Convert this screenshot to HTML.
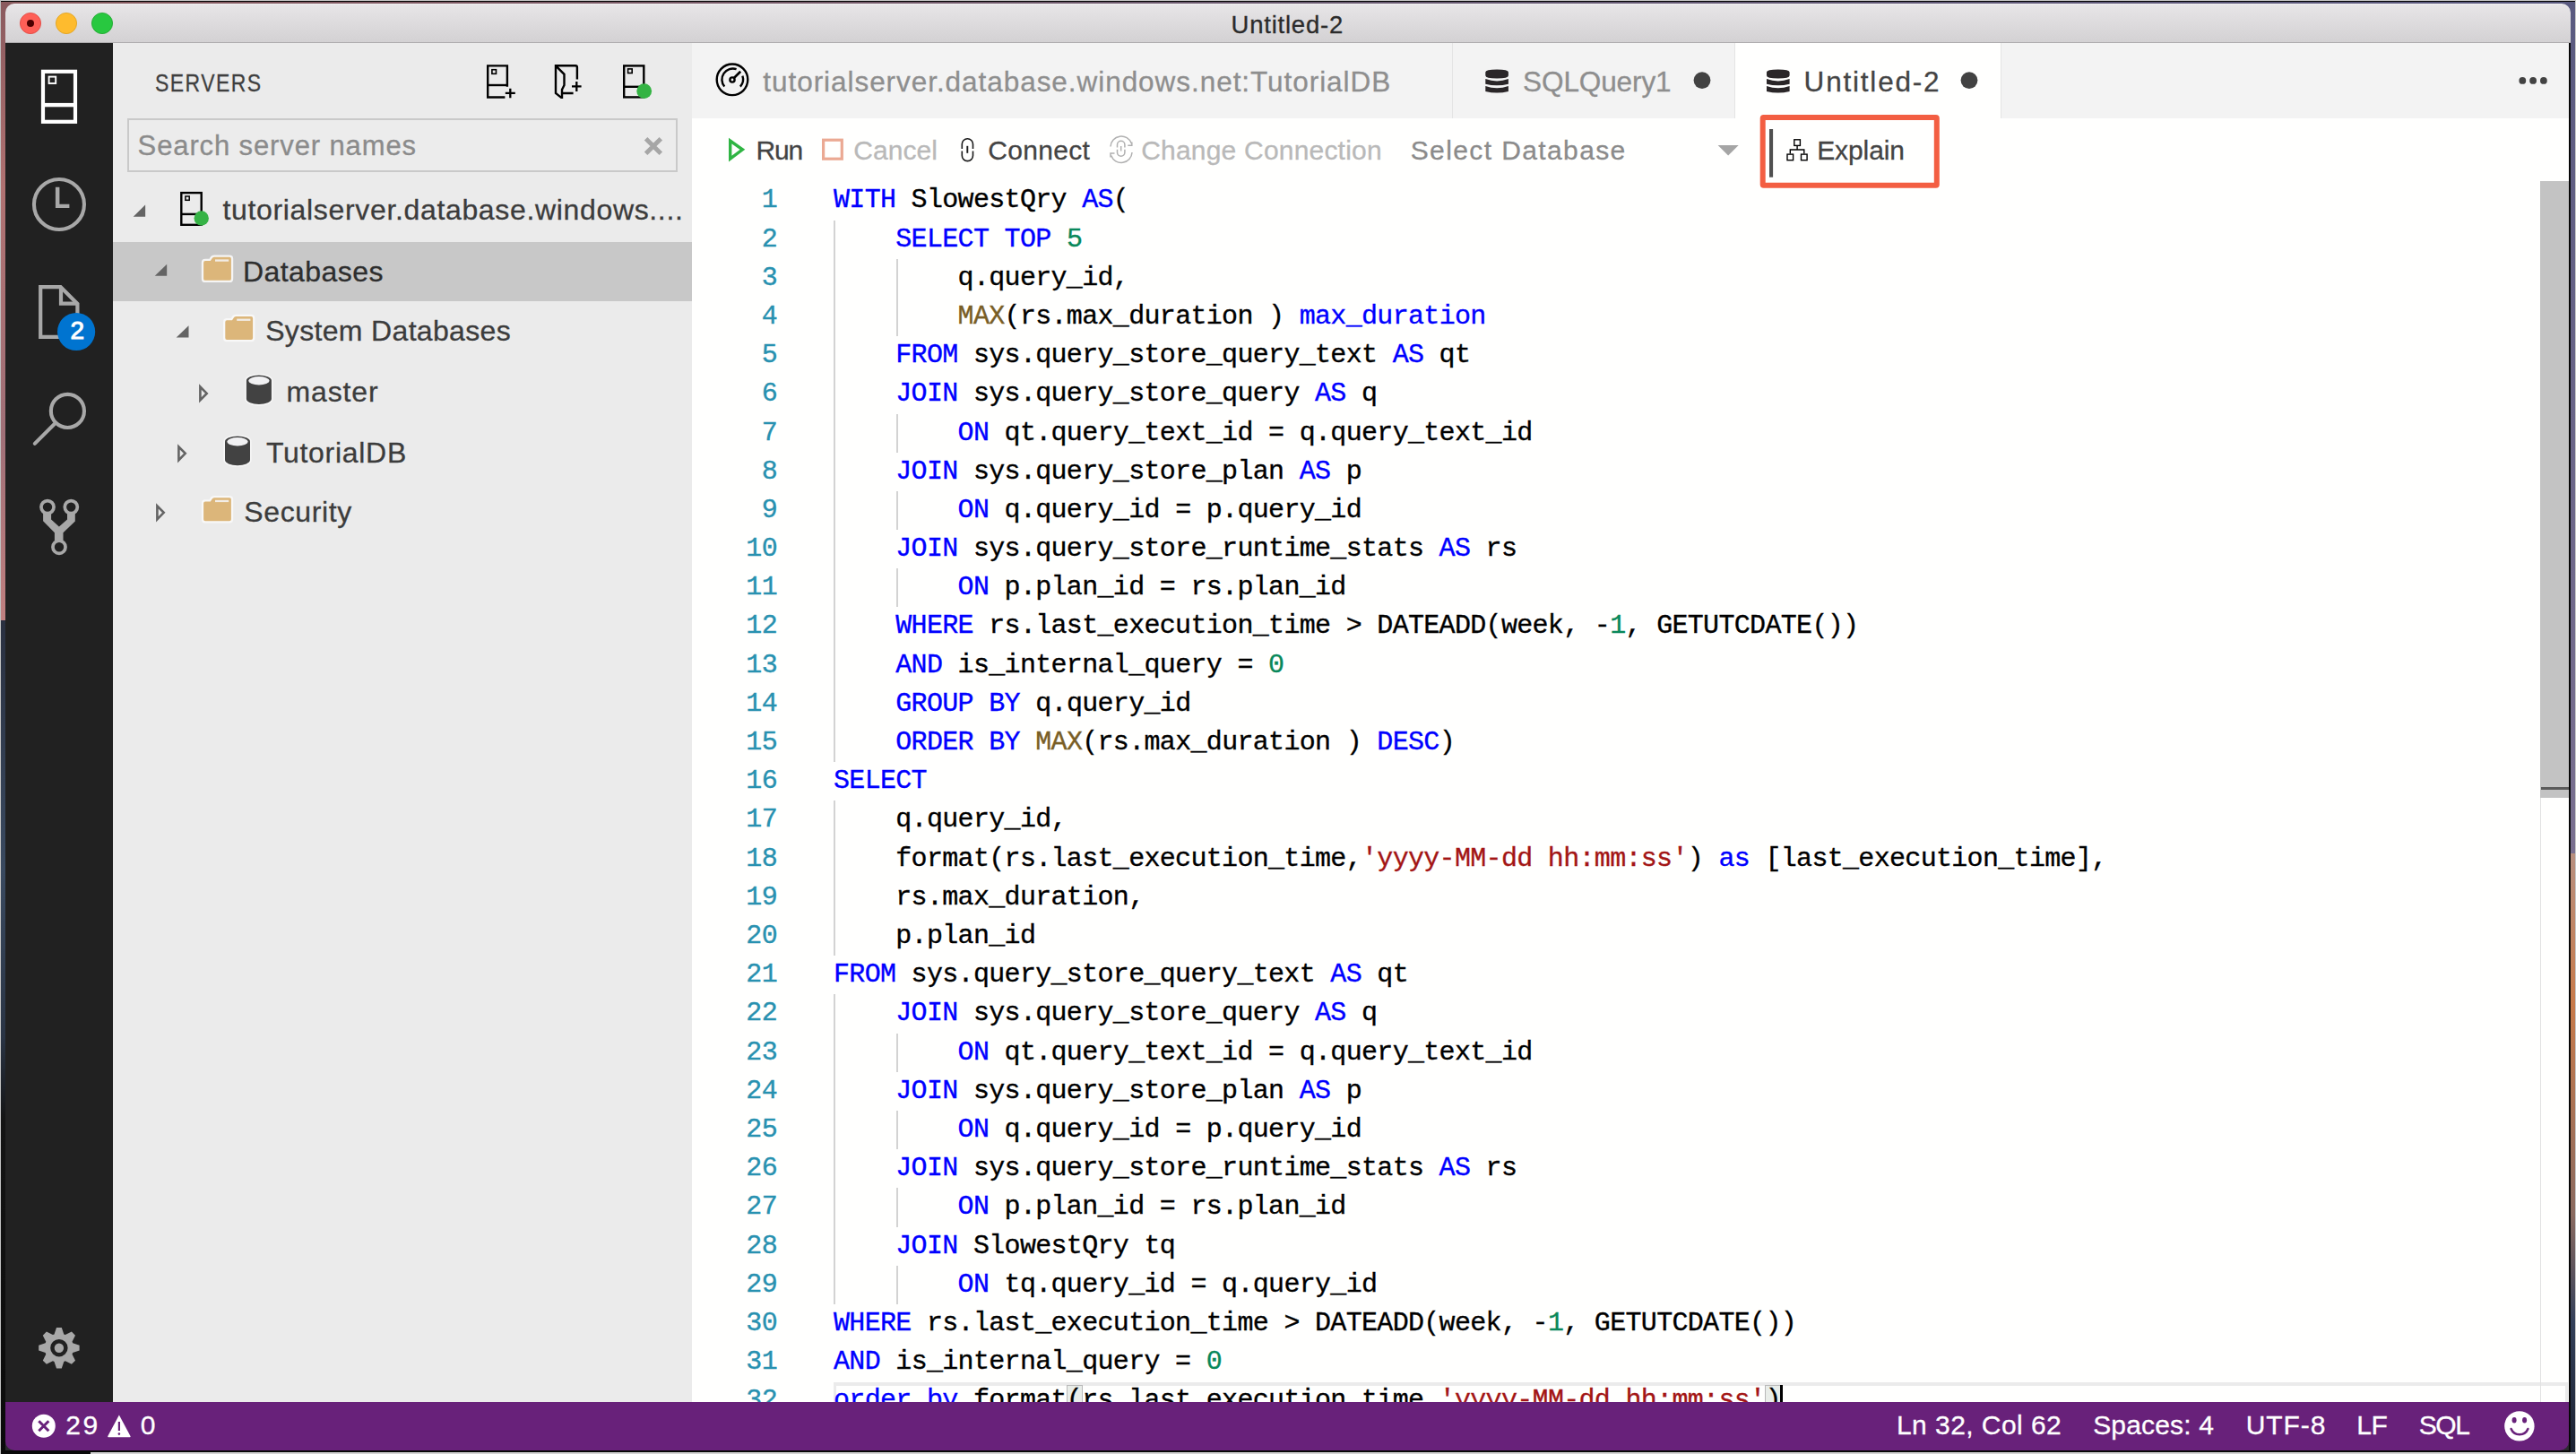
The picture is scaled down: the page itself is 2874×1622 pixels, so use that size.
<!DOCTYPE html>
<html><head><meta charset="utf-8">
<style>
*{margin:0;padding:0;box-sizing:border-box}
html,body{width:2874px;height:1622px;overflow:hidden;background:#2a2a2e}
body{position:relative;font-family:"Liberation Sans",sans-serif}
.abs{position:absolute}
.t{position:absolute;white-space:pre;line-height:1;-webkit-text-stroke:0.3px}
#titlebar{position:absolute;left:6px;top:4px;width:2862px;height:44px;border-radius:10px 10px 0 0;background:linear-gradient(#f4f2f4,#e7e5e7 4%,#d3d1d3);border-bottom:1px solid #aeacae}
#act{position:absolute;left:6px;top:48px;width:120px;height:1516px;background:#212121}
#side{position:absolute;left:126px;top:48px;width:646px;height:1516px;background:#ebebeb}
#editor{position:absolute;left:772px;top:48px;width:2094px;height:1516px;background:#fffffe}
#tabs{position:absolute;left:772px;top:48px;width:2094px;height:84px;background:#f3f3f3}
#status{position:absolute;left:6px;top:1564px;width:2860px;height:54px;background:#68217a;border-radius:0 0 10px 10px}
#codeclip{position:absolute;left:772px;top:132px;width:2094px;height:1432px;overflow:hidden}
#code{position:absolute;left:-772px;top:-132px;width:2874px;height:1622px;font-family:"Liberation Mono",monospace;font-size:30px;letter-spacing:-0.68px;-webkit-text-stroke:0.35px}
.ln{position:absolute;left:0;height:43.19px;line-height:43.19px;width:2874px;white-space:pre;color:#000}
.ln b{position:absolute;font-weight:normal;color:#2891b0;right:2007px;}
.ln span{position:absolute;left:930px}
i{font-style:normal}
.k{color:#0000ff}.s{color:#a31515}.n{color:#09885a}.f{color:#795e26}
.ig{position:absolute;width:2px;background:#d3d3d3}
</style></head><body>
<!-- desktop edges -->
<div class="abs" style="left:0;top:0;width:2874px;height:1px;background:#c8c8c8"></div>
<div class="abs" style="left:0;top:1px;width:2874px;height:1px;background:#050505"></div>
<div class="abs" style="left:0;top:2px;width:2874px;height:20px;background:linear-gradient(90deg,#8a5a5e,#6a5a70 50%,#5a5a80)"></div>
<div class="abs" style="left:0;top:0;width:1px;height:1622px;background:#c0c0c0"></div>
<div class="abs" style="left:1px;top:2px;width:5px;height:690px;background:linear-gradient(#8a5a5e,#b07272 30%,#a07078 70%,#c08080)"></div>
<div class="abs" style="left:1px;top:692px;width:5px;height:930px;background:linear-gradient(#2a3040,#3a4a60 30%,#2a3444 50%,#141414 60%,#0a0a0a)"></div>
<div class="abs" style="left:2866px;top:48px;width:2px;height:1574px;background:#080808"></div>
<div class="abs" style="left:2868px;top:2px;width:5px;height:950px;background:linear-gradient(#5a5a80,#7a7090)"></div>
<div class="abs" style="left:2868px;top:952px;width:5px;height:670px;background:linear-gradient(#b89080,#c87a4a 25%,#8a6a60 60%,#34405a 78%,#1a2030)"></div>
<div class="abs" style="left:2873px;top:0;width:1px;height:1622px;background:#c8c8c8"></div>
<div class="abs" style="left:6px;top:1618px;width:2862px;height:2px;background:#080808"></div>
<div class="abs" style="left:101px;top:1620px;width:2773px;height:2px;background:#d4d4d4"></div>
<div class="abs" style="left:1px;top:1620px;width:100px;height:2px;background:#0a0a0a"></div>
<div id="titlebar"></div>
<div id="act"></div>
<div id="side"></div>
<div id="editor"></div>
<div id="tabs"></div>
<!-- selected tree row -->
<div class="abs" style="left:126px;top:270px;width:646px;height:66px;background:#c8c8c8"></div>
<!-- search box -->
<div class="abs" style="left:142px;top:132px;width:614px;height:60px;border:2px solid #c9c9c9;background:#ececec"></div>
<!-- tab separators / active tab -->
<div class="abs" style="left:1620px;top:48px;width:1px;height:84px;background:#e4e4e4"></div>
<div class="abs" style="left:1935px;top:48px;width:1px;height:84px;background:#e4e4e4"></div>
<div class="abs" style="left:1936px;top:48px;width:296px;height:84px;background:#fffffe"></div>
<div class="abs" style="left:2232px;top:48px;width:1px;height:84px;background:#e4e4e4"></div>

<div id="codeclip"><div id="code">
<div class="ig" style="left:930.0px;top:245.59px;height:604.66px"></div><div class="ig" style="left:1000.3px;top:288.78px;height:86.38px"></div><div class="ig" style="left:1000.3px;top:461.54px;height:43.19px"></div><div class="ig" style="left:1000.3px;top:547.92px;height:43.19px"></div><div class="ig" style="left:1000.3px;top:634.30px;height:43.19px"></div><div class="ig" style="left:930.0px;top:893.44px;height:172.76px"></div><div class="ig" style="left:930.0px;top:1109.39px;height:345.52px"></div><div class="ig" style="left:1000.3px;top:1152.58px;height:43.19px"></div><div class="ig" style="left:1000.3px;top:1238.96px;height:43.19px"></div><div class="ig" style="left:1000.3px;top:1325.34px;height:43.19px"></div><div class="ig" style="left:1000.3px;top:1411.72px;height:43.19px"></div>
<div class="abs" style="left:930px;top:1542px;width:1935px;height:44px;border:3px solid #ebebeb;border-top-width:4px"></div>
<div class="abs" style="left:1190px;top:1545px;width:18px;height:38px;background:#e9ede9;border:1px solid #b9b9b9"></div>
<div class="abs" style="left:1969px;top:1545px;width:18px;height:38px;background:#e9ede9;border:1px solid #b9b9b9"></div>
<div class="abs" style="left:1986px;top:1545px;width:3px;height:40px;background:#000"></div>
<div class="ln" style="top:202.40px"><b>1</b><span><i class="k">WITH</i> SlowestQry <i class="k">AS</i>(</span></div>
<div class="ln" style="top:245.59px"><b>2</b><span>    <i class="k">SELECT</i> <i class="k">TOP</i> <i class="n">5</i></span></div>
<div class="ln" style="top:288.78px"><b>3</b><span>        q.query_id,</span></div>
<div class="ln" style="top:331.97px"><b>4</b><span>        <i class="f">MAX</i>(rs.max_duration ) <i class="k">max_duration</i></span></div>
<div class="ln" style="top:375.16px"><b>5</b><span>    <i class="k">FROM</i> sys.query_store_query_text <i class="k">AS</i> qt</span></div>
<div class="ln" style="top:418.35px"><b>6</b><span>    <i class="k">JOIN</i> sys.query_store_query <i class="k">AS</i> q</span></div>
<div class="ln" style="top:461.54px"><b>7</b><span>        <i class="k">ON</i> qt.query_text_id = q.query_text_id</span></div>
<div class="ln" style="top:504.73px"><b>8</b><span>    <i class="k">JOIN</i> sys.query_store_plan <i class="k">AS</i> p</span></div>
<div class="ln" style="top:547.92px"><b>9</b><span>        <i class="k">ON</i> q.query_id = p.query_id</span></div>
<div class="ln" style="top:591.11px"><b>10</b><span>    <i class="k">JOIN</i> sys.query_store_runtime_stats <i class="k">AS</i> rs</span></div>
<div class="ln" style="top:634.30px"><b>11</b><span>        <i class="k">ON</i> p.plan_id = rs.plan_id</span></div>
<div class="ln" style="top:677.49px"><b>12</b><span>    <i class="k">WHERE</i> rs.last_execution_time &gt; DATEADD(week, -<i class="n">1</i>, GETUTCDATE())</span></div>
<div class="ln" style="top:720.68px"><b>13</b><span>    <i class="k">AND</i> is_internal_query = <i class="n">0</i></span></div>
<div class="ln" style="top:763.87px"><b>14</b><span>    <i class="k">GROUP</i> <i class="k">BY</i> q.query_id</span></div>
<div class="ln" style="top:807.06px"><b>15</b><span>    <i class="k">ORDER</i> <i class="k">BY</i> <i class="f">MAX</i>(rs.max_duration ) <i class="k">DESC</i>)</span></div>
<div class="ln" style="top:850.25px"><b>16</b><span><i class="k">SELECT</i></span></div>
<div class="ln" style="top:893.44px"><b>17</b><span>    q.query_id,</span></div>
<div class="ln" style="top:936.63px"><b>18</b><span>    format(rs.last_execution_time,<i class="s">&#x27;yyyy-MM-dd hh:mm:ss&#x27;</i>) <i class="k">as</i> [last_execution_time],</span></div>
<div class="ln" style="top:979.82px"><b>19</b><span>    rs.max_duration,</span></div>
<div class="ln" style="top:1023.01px"><b>20</b><span>    p.plan_id</span></div>
<div class="ln" style="top:1066.20px"><b>21</b><span><i class="k">FROM</i> sys.query_store_query_text <i class="k">AS</i> qt</span></div>
<div class="ln" style="top:1109.39px"><b>22</b><span>    <i class="k">JOIN</i> sys.query_store_query <i class="k">AS</i> q</span></div>
<div class="ln" style="top:1152.58px"><b>23</b><span>        <i class="k">ON</i> qt.query_text_id = q.query_text_id</span></div>
<div class="ln" style="top:1195.77px"><b>24</b><span>    <i class="k">JOIN</i> sys.query_store_plan <i class="k">AS</i> p</span></div>
<div class="ln" style="top:1238.96px"><b>25</b><span>        <i class="k">ON</i> q.query_id = p.query_id</span></div>
<div class="ln" style="top:1282.15px"><b>26</b><span>    <i class="k">JOIN</i> sys.query_store_runtime_stats <i class="k">AS</i> rs</span></div>
<div class="ln" style="top:1325.34px"><b>27</b><span>        <i class="k">ON</i> p.plan_id = rs.plan_id</span></div>
<div class="ln" style="top:1368.53px"><b>28</b><span>    <i class="k">JOIN</i> SlowestQry tq</span></div>
<div class="ln" style="top:1411.72px"><b>29</b><span>        <i class="k">ON</i> tq.query_id = q.query_id</span></div>
<div class="ln" style="top:1454.91px"><b>30</b><span><i class="k">WHERE</i> rs.last_execution_time &gt; DATEADD(week, -<i class="n">1</i>, GETUTCDATE())</span></div>
<div class="ln" style="top:1498.10px"><b>31</b><span><i class="k">AND</i> is_internal_query = <i class="n">0</i></span></div>
<div class="ln" style="top:1541.29px"><b>32</b><span><i class="k">order</i> <i class="k">by</i> format(rs.last_execution_time,<i class="s">&#x27;yyyy-MM-dd hh:mm:ss&#x27;</i>)</span></div>
</div></div>
<!-- scrollbar -->
<div class="abs" style="left:2834px;top:202px;width:1px;height:1362px;background:#e2e2e2"></div>
<div class="abs" style="left:2834px;top:202px;width:32px;height:688px;background:#c3c3c3"></div>
<div class="abs" style="left:2835px;top:878px;width:31px;height:3px;background:#5a5a5a"></div>

<div id="status"></div>

<div class="t" id="title" style="left:1373.6px;top:13.5px;font-size:27.5px;letter-spacing:0.77px;color:#2b2b2b;">Untitled-2</div>
<div class="t" id="servers" style="left:173.4px;top:79.1px;font-size:28px;letter-spacing:1.78px;color:#3f3f3f;transform:scaleX(0.82);transform-origin:0 0;">SERVERS</div>
<div class="t" id="search" style="left:153.6px;top:147.4px;font-size:31px;letter-spacing:0.88px;color:#8b8b8b;">Search server names</div>
<div class="t" id="root" style="left:248.5px;top:217.7px;font-size:32px;letter-spacing:0.66px;color:#3c3c3c;">tutorialserver.database.windows....</div>
<div class="t" id="dbs" style="left:271.0px;top:286.6px;font-size:32px;letter-spacing:0.44px;color:#2e2e2e;">Databases</div>
<div class="t" id="sysdb" style="left:296.2px;top:352.8px;font-size:32px;letter-spacing:0.33px;color:#3c3c3c;">System Databases</div>
<div class="t" id="master" style="left:319.4px;top:420.9px;font-size:32px;letter-spacing:0.90px;color:#3c3c3c;">master</div>
<div class="t" id="tutdb" style="left:296.9px;top:488.5px;font-size:32px;letter-spacing:0.71px;color:#3c3c3c;">TutorialDB</div>
<div class="t" id="security" style="left:272.2px;top:554.6px;font-size:32px;letter-spacing:0.65px;color:#3c3c3c;">Security</div>
<div class="t" id="tab1" style="left:851.3px;top:75.8px;font-size:31.5px;letter-spacing:0.95px;color:#8e8e8e;">tutorialserver.database.windows.net:TutorialDB</div>
<div class="t" id="tab2" style="left:1699.1px;top:75.8px;font-size:31.5px;letter-spacing:-0.11px;color:#8e8e8e;">SQLQuery1</div>
<div class="t" id="tab3" style="left:2012.6px;top:75.8px;font-size:31.5px;letter-spacing:1.80px;color:#444444;">Untitled-2</div>
<div class="t" id="run" style="left:843.5px;top:152.5px;font-size:30px;letter-spacing:-1.23px;color:#444444;">Run</div>
<div class="t" id="cancel" style="left:952.3px;top:152.5px;font-size:30px;letter-spacing:0.07px;color:#b9b9b9;">Cancel</div>
<div class="t" id="connect" style="left:1102.2px;top:152.6px;font-size:30px;letter-spacing:0.33px;color:#444444;">Connect</div>
<div class="t" id="chconn" style="left:1273.2px;top:152.6px;font-size:30px;letter-spacing:0.20px;color:#b9b9b9;">Change Connection</div>
<div class="t" id="seldb" style="left:1573.7px;top:152.6px;font-size:30px;letter-spacing:1.39px;color:#8b8b8b;">Select Database</div>
<div class="t" id="explain" style="left:2027.2px;top:152.6px;font-size:30px;letter-spacing:-0.10px;color:#444444;">Explain</div>
<div class="t" id="err" style="left:73.2px;top:1574.6px;font-size:30px;letter-spacing:2.55px;color:#ffffff;">29</div>
<div class="t" id="warn" style="left:156.8px;top:1574.6px;font-size:30px;letter-spacing:0.00px;color:#ffffff;">0</div>
<div class="t" id="lncol" style="left:2116.0px;top:1574.6px;font-size:30px;letter-spacing:0.44px;color:#ffffff;">Ln 32, Col 62</div>
<div class="t" id="spaces" style="left:2335.2px;top:1574.6px;font-size:30px;letter-spacing:0.17px;color:#ffffff;">Spaces: 4</div>
<div class="t" id="utf" style="left:2505.7px;top:1574.6px;font-size:30px;letter-spacing:0.91px;color:#ffffff;">UTF-8</div>
<div class="t" id="lf" style="left:2629.3px;top:1574.6px;font-size:30px;letter-spacing:-0.47px;color:#ffffff;">LF</div>
<div class="t" id="sql" style="left:2698.7px;top:1574.6px;font-size:30px;letter-spacing:-1.34px;color:#ffffff;">SQL</div>

<svg class="abs" style="left:0;top:0" width="2874" height="1622" viewBox="0 0 2874 1622">
 <!-- traffic lights -->
 <circle cx="34" cy="26" r="11.6" fill="#fe5f57" stroke="#e0443e" stroke-width="0.8"/>
 <circle cx="34" cy="26" r="4" fill="#4d0000"/>
 <circle cx="74" cy="26" r="11.6" fill="#febb2e" stroke="#de9f19" stroke-width="0.8"/>
 <circle cx="114" cy="26" r="11.6" fill="#28c840" stroke="#1aa52a" stroke-width="0.8"/>
 <!-- activity: servers -->
 <g fill="none" stroke="#fff">
  <rect x="48" y="79.8" width="36" height="56" stroke-width="4.2"/>
  <line x1="50" y1="117.1" x2="82" y2="117.1" stroke-width="4.4"/>
  <rect x="54.6" y="85.6" width="7.6" height="7.4" stroke-width="1.9"/>
 </g>
 <!-- clock -->
 <g fill="none" stroke="#a8a8a8">
  <circle cx="65.95" cy="228" r="28" stroke-width="4.1"/>
 </g>
 <path d="M61.9,208.8 H66.4 V227.7 H77.4 V232 H61.9 Z" fill="#a8a8a8"/>
 <!-- file -->
 <g fill="none" stroke="#a8a8a8" stroke-width="4.2" stroke-linejoin="miter">
  <path d="M45.2,375.9 V320.1 H67.6 L86.4,338.9 V375.9 Z"/>
  <path d="M68,320 V338.6 H86.4"/>
 </g>
 <circle cx="85.1" cy="370" r="21.1" fill="#0074d0"/>
 <!-- search -->
 <g fill="none" stroke="#a8a8a8" stroke-width="4.1" stroke-linecap="round">
  <circle cx="75.4" cy="458.4" r="18.55"/>
  <line x1="38.8" y1="494.9" x2="62" y2="471.7"/>
 </g>
 <!-- git -->
 <g fill="none" stroke="#a8a8a8" stroke-width="3.7">
  <circle cx="53" cy="565.6" r="7.05"/>
  <circle cx="79.3" cy="565.6" r="7.05"/>
  <circle cx="66" cy="610.3" r="7.05"/>
 </g>
 <path d="M48.1,572 L57.1,572 L57.1,579.6 L65.9,587.5 L75,579.6 L75,572 L83.8,572 L83.8,581.5 L70.5,594.3 L70.5,603.5 L60.9,603.5 L60.9,594.3 L48.1,581.3 Z" fill="#a8a8a8"/>
 <!-- gear -->
 <path fill="#a8a8a8" fill-rule="evenodd" d="M60.50,1488.43 L63.00,1480.98 L68.80,1480.98 L71.30,1488.43 L72.88,1489.08 L79.91,1485.59 L84.01,1489.69 L80.52,1496.72 L81.17,1498.30 L88.62,1500.80 L88.62,1506.60 L81.17,1509.10 L80.52,1510.68 L84.01,1517.71 L79.91,1521.81 L72.88,1518.32 L71.30,1518.97 L68.80,1526.42 L63.00,1526.42 L60.50,1518.97 L58.92,1518.32 L51.89,1521.81 L47.79,1517.71 L51.28,1510.68 L50.63,1509.10 L43.18,1506.60 L43.18,1500.80 L50.63,1498.30 L51.28,1496.72 L47.79,1489.69 L51.89,1485.59 L58.92,1489.08 Z M75.6,1503.7 A9.7,9.7 0 1 0 56.2,1503.7 A9.7,9.7 0 1 0 75.6,1503.7 Z"/>
 <circle cx="65.9" cy="1503.7" r="5.2" fill="#a8a8a8"/>

 <!-- sidebar header icons -->
 <g fill="none" stroke="#000" stroke-width="2.4">
  <path d="M565.9,96.7 V73.4 H544.2 V108.5 H563.4"/>
  <line x1="544.2" y1="95" x2="565.9" y2="95"/>
  <rect x="548.9" y="77.7" width="4.6" height="4.6" stroke-width="1.6"/>
  <path d="M563.8,103.9 H574.8 M569.3,98.7 V109.3" stroke-width="2.3"/>
  <path d="M639.6,104 H627 M643.9,88.5 V75 Q643.9,73.2 642.1,73.2 H620 V104 L626.2,108.9 L627,108.9 V100 L629.5,95 V82.8 L620.3,73.6"/>
  <path d="M638,96.4 H648.6 M643.3,91 V102" stroke-width="2.3"/>
  <rect x="696.2" y="73.4" width="22.1" height="35" />
  <line x1="696.2" y1="96.8" x2="718.3" y2="96.8"/>
  <rect x="700.6" y="76.9" width="4.6" height="4.6" stroke-width="1.6"/>
 </g>
 <circle cx="718.7" cy="101.6" r="8.4" fill="#33b343"/>

 <path d="M720.6,154.8 L737.3,171.3 M737.3,154.8 L720.6,171.3" stroke="#a6a6a6" stroke-width="5" />
 <!-- tree: root -->
 <path d="M148.7,241.8 H162.1 V228.6 Z" fill="#646464"/>
 <g fill="none" stroke="#000" stroke-width="2.4">
  <rect x="202.3" y="215.1" width="22.4" height="35.7"/>
  <line x1="202.3" y1="238.9" x2="224.7" y2="238.9"/>
  <rect x="206.9" y="219" width="4.3" height="4.3" stroke-width="1.5"/>
 </g>
 <circle cx="224.7" cy="243.5" r="8.2" fill="#36b346"/>
 <!-- tree triangles -->
 <path d="M172.7,307.8 H186.2 V294.7 Z" fill="#646464"/>
 <path d="M196.7,376.4 H210.5 V363.3 Z" fill="#646464"/>
 <path d="M223.4,431.5 V446.4 L230.7,438.9 Z" fill="none" stroke="#646464" stroke-width="2.6"/>
 <path d="M199.4,498.4 V513.3 L206.7,505.8 Z" fill="none" stroke="#646464" stroke-width="2.6"/>
 <path d="M175.4,564.4 V579.3 L182.7,571.8 Z" fill="none" stroke="#646464" stroke-width="2.6"/>
 <!-- folders -->
 <path d="M227.1,293 Q227.1,291.1 229,291.1 H234.8 L236.6,288.3 Q237.3,286.8 239,286.8 H256 Q257.9,286.8 257.9,288.7 V310.9 Q257.9,312.8 256,312.8 H229 Q227.1,312.8 227.1,310.9 Z" fill="#fff" stroke="#fafafa" stroke-width="4.6" stroke-linejoin="round" opacity="0.9"/><path d="M227.1,293 Q227.1,291.1 229,291.1 H234.8 L236.6,288.3 Q237.3,286.8 239,286.8 H256 Q257.9,286.8 257.9,288.7 V310.9 Q257.9,312.8 256,312.8 H229 Q227.1,312.8 227.1,310.9 Z" fill="#dcb67a"/><rect x="240" y="289.4" width="15.2" height="2.3" fill="#f2ede6"/><path d="M251.29999999999998,359.2 Q251.29999999999998,357.3 253.2,357.3 H259.0 L260.8,354.5 Q261.5,353.0 263.2,353.0 H280.2 Q282.09999999999997,353.0 282.09999999999997,354.9 V377.09999999999997 Q282.09999999999997,379.0 280.2,379.0 H253.2 Q251.29999999999998,379.0 251.29999999999998,377.09999999999997 Z" fill="#fff" stroke="#fafafa" stroke-width="4.6" stroke-linejoin="round" opacity="0.9"/><path d="M251.29999999999998,359.2 Q251.29999999999998,357.3 253.2,357.3 H259.0 L260.8,354.5 Q261.5,353.0 263.2,353.0 H280.2 Q282.09999999999997,353.0 282.09999999999997,354.9 V377.09999999999997 Q282.09999999999997,379.0 280.2,379.0 H253.2 Q251.29999999999998,379.0 251.29999999999998,377.09999999999997 Z" fill="#dcb67a"/><rect x="264.2" y="355.59999999999997" width="15.2" height="2.3" fill="#f2ede6"/><path d="M227.1,561.4 Q227.1,559.5 229,559.5 H234.8 L236.6,556.7 Q237.3,555.2 239,555.2 H256 Q257.9,555.2 257.9,557.0999999999999 V579.3 Q257.9,581.2 256,581.2 H229 Q227.1,581.2 227.1,579.3 Z" fill="#fff" stroke="#fafafa" stroke-width="4.6" stroke-linejoin="round" opacity="0.9"/><path d="M227.1,561.4 Q227.1,559.5 229,559.5 H234.8 L236.6,556.7 Q237.3,555.2 239,555.2 H256 Q257.9,555.2 257.9,557.0999999999999 V579.3 Q257.9,581.2 256,581.2 H229 Q227.1,581.2 227.1,579.3 Z" fill="#dcb67a"/><rect x="240" y="557.8" width="15.2" height="2.3" fill="#f2ede6"/>
 <!-- db cylinders -->
 <path d="M274.9,424.6 A14.0,6.1 0 0 1 302.9,424.6 V445.0 A14.0,6.1 0 0 1 274.9,445.0 Z" fill="#424242" stroke="#f7f7f7" stroke-width="3.2"/><path d="M274.9,424.6 A14.0,6.1 0 0 1 302.9,424.6 V445.0 A14.0,6.1 0 0 1 274.9,445.0 Z" fill="#424242"/><ellipse cx="288.9" cy="424.70000000000005" rx="11.7" ry="4.699999999999999" fill="#f1f1f3"/><path d="M251,492.6 A14.0,6.1 0 0 1 279,492.6 V513.1 A14.0,6.1 0 0 1 251,513.1 Z" fill="#424242" stroke="#f7f7f7" stroke-width="3.2"/><path d="M251,492.6 A14.0,6.1 0 0 1 279,492.6 V513.1 A14.0,6.1 0 0 1 251,513.1 Z" fill="#424242"/><ellipse cx="265.0" cy="492.70000000000005" rx="11.7" ry="4.699999999999999" fill="#f1f1f3"/>

 <!-- tab icons -->
 <g fill="none" stroke="#000" stroke-width="2.4">
  <circle cx="817" cy="88.8" r="17.3"/>
  <path d="M808.3,96.6 A12.2,12.2 0 0 1 821.6,77.2"/>
  <path d="M828.4,84.6 A12.2,12.2 0 0 1 825.9,96.6"/>
  <circle cx="817" cy="89" r="2.6"/>
  <line x1="818.9" y1="87" x2="826.2" y2="79.8" stroke-width="2.6"/>
 </g>
 <path d="M1657.3,80.6 Q1657.3,77.4 1670.1,77.4 Q1682.9,77.4 1682.9,80.6 V84.2 Q1682.9,87.4 1670.1,87.4 Q1657.3,87.4 1657.3,84.2 Z M1657.3,88 Q1670.1,92.8 1682.9,88 V93.7 Q1670.1,96.7 1657.3,93.7 Z M1657.3,96.1 Q1670.1,100.5 1682.9,96.1 V101.9 Q1670.1,104.9 1657.3,101.9 Z" fill="#2a2628"/><path d="M1971.0,80.6 Q1971.0,77.4 1983.8000000000002,77.4 Q1996.6000000000001,77.4 1996.6000000000001,80.6 V84.2 Q1996.6000000000001,87.4 1983.8000000000002,87.4 Q1971.0,87.4 1971.0,84.2 Z M1971.0,88 Q1983.8000000000002,92.8 1996.6000000000001,88 V93.7 Q1983.8000000000002,96.7 1971.0,93.7 Z M1971.0,96.1 Q1983.8000000000002,100.5 1996.6000000000001,96.1 V101.9 Q1983.8000000000002,104.9 1971.0,101.9 Z" fill="#2a2628"/>
 <circle cx="1899" cy="89.6" r="9.4" fill="#424242"/>
 <circle cx="2197" cy="89.6" r="9.4" fill="#424242"/>
 <circle cx="2814.3" cy="89.9" r="3.9" fill="#424242"/>
 <circle cx="2826.1" cy="89.9" r="3.9" fill="#424242"/>
 <circle cx="2837.9" cy="89.9" r="3.9" fill="#424242"/>

 <!-- toolbar icons -->
 <path d="M814.7,157 V177.1 L828.4,166.8 Z" fill="none" stroke="#2fb543" stroke-width="3.4"/>
 <rect x="918.6" y="156.2" width="20.7" height="21" fill="none" stroke="#eba993" stroke-width="3.2"/>
 <g fill="none" stroke="#1a1a1a" stroke-width="1.6">
  <path d="M1073.3,166 V160.8 A6.1,6.1 0 0 1 1085.5,160.8 V166"/>
  <path d="M1073.3,168.6 V173.5 A6.1,6.1 0 0 0 1085.5,173.5 V168.6"/>
  <line x1="1079.3" y1="162.8" x2="1079.3" y2="170.8" stroke-width="1.9"/>
 </g>
 <g fill="none" stroke="#b0b0b0" stroke-width="1.5">
  <path d="M1246.5,164.5 V161.5 A4.2,4.2 0 0 1 1254.9,161.5 V164.5"/>
  <path d="M1246.5,166.8 V170 A4.2,4.2 0 0 0 1254.9,170 V166.8"/>
  <line x1="1250.7" y1="163" x2="1250.7" y2="168.5"/>
  <path d="M1239,163.5 A12,12 0 0 1 1262.3,160"/>
  <path d="M1262.8,158.5 V162.3 H1258.3"/>
  <path d="M1263,170 A12,12 0 0 1 1239.7,173.5"/>
  <path d="M1239,175.5 V171 H1243.5"/>
 </g>
 <path d="M1916.6,162 H1939.7 L1928.15,173.5 Z" fill="#a5a5a5"/>
 <!-- explain box -->
 <rect x="1966.7" y="130.9" width="194.1" height="75.9" rx="1" fill="none" stroke="#f35e42" stroke-width="6"/>
 <rect x="1974" y="144" width="4.1" height="53.7" fill="#505050"/>
 <g fill="none" stroke="#000" stroke-width="1.4">
  <rect x="2001.8" y="155.8" width="6.6" height="6.6"/>
  <path d="M2005.1,162.4 V167 M1997.3,171.5 V167 H2012.8 V171.5"/>
  <rect x="1994" y="172.1" width="6.6" height="6.6"/>
  <rect x="2009.5" y="172.1" width="6.6" height="6.6"/>
 </g>

 <!-- status icons -->
 <circle cx="48.8" cy="1590.8" r="13" fill="#fff"/>
 <path d="M43.3,1585.3 L54.3,1596.3 M54.3,1585.3 L43.3,1596.3" stroke="#68217a" stroke-width="3"/>
 <path d="M132.9,1578.5 L145.6,1602.2 Q145.8,1603.2 144.8,1603.2 H121 Q120,1603.2 120.2,1602.2 Z" fill="#fff"/>
 <path d="M132.9,1586 V1596" stroke="#68217a" stroke-width="2.2"/>
 <circle cx="132.9" cy="1599.6" r="1.3" fill="#68217a"/>
 <circle cx="2810.9" cy="1590.9" r="16.7" fill="#fff"/>
 <ellipse cx="2805.1" cy="1584.3" rx="2.5" ry="3.3" fill="#68217a"/>
 <ellipse cx="2816.6" cy="1584.3" rx="2.5" ry="3.3" fill="#68217a"/>
 <path d="M2801.6,1594 A10.2,10.2 0 0 0 2820.4,1594" fill="none" stroke="#68217a" stroke-width="2.5" stroke-linecap="round"/>
</svg>
<div class="t" style="left:78.5px;top:355px;font-size:28px;color:#fff;-webkit-text-stroke:1px">2</div>
</body></html>
